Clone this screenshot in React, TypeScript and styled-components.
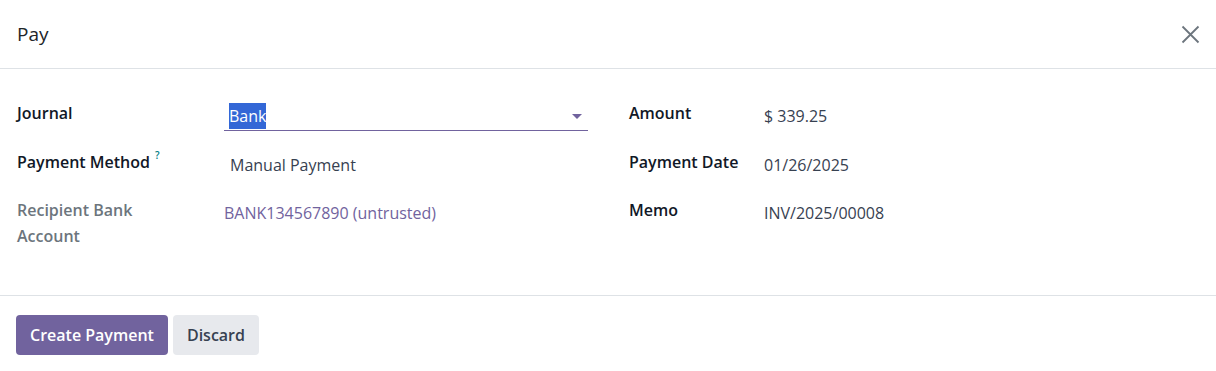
import { createGlobalStyle, styled } from 'styled-components';

const GlobalStyle = createGlobalStyle`
  html, body {
    margin: 0;
    padding: 0;
    background: #ffffff;
  }

  body {
    font-family: 'Open Sans', 'Noto Sans', sans-serif;
    font-size: 16px;
    color: #374151;
  }
`;

const S = {
  Dialog: styled.div`
    width: 1216px;
    background: #ffffff;
  `,

  Header: styled.header`
    display: flex;
    align-items: center;
    justify-content: space-between;
    height: 69px;
    padding: 0 14px 0 17px;
    box-sizing: border-box;
    border-bottom: 1px solid #dee2e6;
  `,

  Title: styled.h1`
    margin: 0;
    font-size: 19px;
    font-weight: 500;
    color: #212529;
  `,

  CloseButton: styled.button`
    display: flex;
    align-items: center;
    justify-content: center;
    width: 24px;
    height: 24px;
    padding: 0;
    border: none;
    background: none;
    color: #6c757d;
    cursor: pointer;
  `,

  Body: styled.div`
    display: grid;
    grid-template-columns: 1fr 1fr;
    column-gap: 40px;
    height: 227px;
    padding: 31px 16px 0 16px;
    box-sizing: border-box;
    border-bottom: 1px solid #dee2e6;
  `,

  Group: styled.div`
    display: flex;
    flex-direction: column;
  `,

  Row: styled.div<{ $labelWidth: number }>`
    display: grid;
    grid-template-columns: ${({ $labelWidth }) => `${$labelWidth}px`} 1fr;
    align-items: start;
    min-height: 48.5px;
  `,

  Label: styled.label<{ $muted?: boolean }>`
    padding-left: 1px;
    font-weight: 600;
    line-height: 26px;
    color: ${({ $muted }) => ($muted ? '#6c757d' : '#111827')};
  `,

  Help: styled.sup`
    position: relative;
    top: 6px;
    margin-left: 5px;
    font-size: 10px;
    font-weight: 600;
    line-height: 0;
    vertical-align: top;
    color: #017e84;
  `,

  SelectField: styled.div`
    display: flex;
    align-items: center;
    justify-content: space-between;
    height: 30px;
    margin-top: 1px;
    padding: 0 6px 0 5px;
    box-sizing: border-box;
    border-bottom: 1px solid #71639e;
  `,

  Selected: styled.span`
    background: #3367d6;
    color: #ffffff;
    line-height: 26px;
  `,

  Caret: styled.span`
    width: 0;
    height: 0;
    margin-top: 2px;
    border-left: 5px solid transparent;
    border-right: 5px solid transparent;
    border-top: 5px solid #71639e;
  `,

  Value: styled.span<{ $link?: boolean; $indent?: number }>`
    padding-top: 3px;
    padding-left: ${({ $indent }) => `${$indent ?? 0}px`};
    line-height: 26px;
    color: ${({ $link }) => ($link ? '#71639e' : '#374151')};
  `,

  Footer: styled.footer`
    display: flex;
    gap: 5px;
    padding: 19px 16px;
  `,

  Button: styled.button<{ $primary?: boolean }>`
    height: 40px;
    padding: 0 14px;
    border: none;
    border-radius: 4px;
    font-family: inherit;
    font-size: 16px;
    font-weight: 600;
    background: ${({ $primary }) => ($primary ? '#71639e' : '#e7e9ed')};
    color: ${({ $primary }) => ($primary ? '#ffffff' : '#374151')};
    cursor: pointer;
  `,
};

function CloseIcon() {
  return (
    <svg width="19" height="19" viewBox="0 0 19 19" fill="none">
      <path d="M1.5 1.5L17.5 17.5M17.5 1.5L1.5 17.5" stroke="currentColor" strokeWidth="1.8" />
    </svg>
  );
}

function App() {
  return (
    <>
      <GlobalStyle />
      <S.Dialog>
        <S.Header>
          <S.Title>Pay</S.Title>
          <S.CloseButton aria-label="Close">
            <CloseIcon />
          </S.CloseButton>
        </S.Header>

        <S.Body>
          <S.Group>
            <S.Row $labelWidth={208}>
              <S.Label>Journal</S.Label>
              <S.SelectField>
                <S.Selected>Bank</S.Selected>
                <S.Caret />
              </S.SelectField>
            </S.Row>
            <S.Row $labelWidth={208}>
              <S.Label>
                Payment Method<S.Help>?</S.Help>
              </S.Label>
              <S.Value $indent={6}>Manual Payment</S.Value>
            </S.Row>
            <S.Row $labelWidth={208}>
              <S.Label $muted>
                Recipient Bank
                <br />
                Account
              </S.Label>
              <S.Value $link>BANK134567890 (untrusted)</S.Value>
            </S.Row>
          </S.Group>

          <S.Group>
            <S.Row $labelWidth={136}>
              <S.Label>Amount</S.Label>
              <S.Value>$ 339.25</S.Value>
            </S.Row>
            <S.Row $labelWidth={136}>
              <S.Label>Payment Date</S.Label>
              <S.Value>01/26/2025</S.Value>
            </S.Row>
            <S.Row $labelWidth={136}>
              <S.Label>Memo</S.Label>
              <S.Value>INV/2025/00008</S.Value>
            </S.Row>
          </S.Group>
        </S.Body>

        <S.Footer>
          <S.Button $primary>Create Payment</S.Button>
          <S.Button>Discard</S.Button>
        </S.Footer>
      </S.Dialog>
    </>
  );
}

export default App;
